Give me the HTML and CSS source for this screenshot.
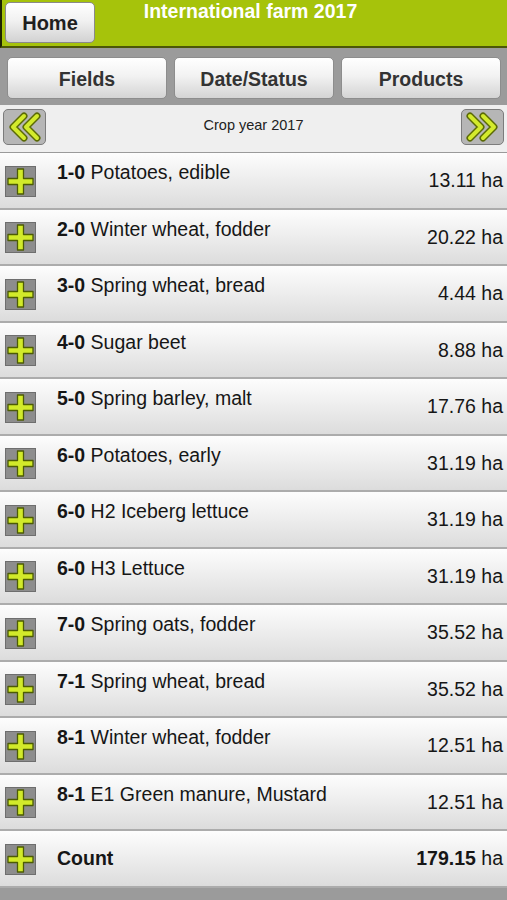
FILE: index.html
```html
<!DOCTYPE html>
<html lang="en">
<head>
  <meta charset="UTF-8" />
  <meta name="viewport" content="width=device-width, initial-scale=1" />
  <title>International farm 2017 - Fields</title>
  <link rel="stylesheet" href="styles.css">
</head>
<body>
  <!-- Green title bar -->
  <header class="header">
    <div class="header-left"><button class="home-btn">Home</button></div>
    <h1 class="title">International farm 2017</h1>
    <div></div>
  </header>

  <!-- Tab buttons -->
  <nav class="tabs">
    <button class="tab">Fields</button>
    <button class="tab">Date/Status</button>
    <button class="tab">Products</button>
  </nav>

  <!-- Crop year switcher -->
  <div class="yearbar">
    <button class="arrow-btn" aria-label="Previous year">
      <svg width="41" height="34" viewBox="0 0 41 34">
        <polyline points="20,6 9,17 20,28" class="chev-out" />
        <polyline points="33,6 22,17 33,28" class="chev-out" />
        <polyline points="20,6 9,17 20,28" class="chev-in" />
        <polyline points="33,6 22,17 33,28" class="chev-in" />
      </svg>
    </button>
    <span class="year-label">Crop year 2017</span>
    <button class="arrow-btn" aria-label="Next year">
      <svg width="41" height="34" viewBox="0 0 41 34">
        <polyline points="8,6 19,17 8,28" class="chev-out" />
        <polyline points="21,6 32,17 21,28" class="chev-out" />
        <polyline points="8,6 19,17 8,28" class="chev-in" />
        <polyline points="21,6 32,17 21,28" class="chev-in" />
      </svg>
    </button>
  </div>

  <!-- Field list -->
  <ul class="fields" id="fields"></ul>

  <div class="footer"></div>

  <script>
    const fields = [
      ['1-0', 'Potatoes, edible', '13.11'],
      ['2-0', 'Winter wheat, fodder', '20.22'],
      ['3-0', 'Spring wheat, bread', '4.44'],
      ['4-0', 'Sugar beet', '8.88'],
      ['5-0', 'Spring barley, malt', '17.76'],
      ['6-0', 'Potatoes, early', '31.19'],
      ['6-0', 'H2 Iceberg lettuce', '31.19'],
      ['6-0', 'H3 Lettuce', '31.19'],
      ['7-0', 'Spring oats, fodder', '35.52'],
      ['7-1', 'Spring wheat, bread', '35.52'],
      ['8-1', 'Winter wheat, fodder', '12.51'],
      ['8-1', 'E1 Green manure, Mustard', '12.51']
    ];

    // Farm total as reported by the app (fields share area, so not a plain sum)
    const totalArea = '179.15';

    // Plus icon used on every row
    const plusIcon =
      '<svg class="plus" width="31" height="31" viewBox="0 0 31 31">' +
      '<rect x="0.5" y="0.5" width="30" height="30" class="plus-box" />' +
      '<polygon points="12.5,3 18.5,3 18.5,12.5 28,12.5 28,18.5 18.5,18.5 18.5,28 12.5,28 12.5,18.5 3,18.5 3,12.5 12.5,12.5" class="plus-cross" />' +
      '</svg>';

    const list = document.getElementById('fields');

    fields.forEach(([code, name, area]) => {
      const li = document.createElement('li');
      li.className = 'row';
      li.innerHTML = plusIcon +
        '<span class="row-label"><b>' + code + '</b> ' + name + '</span>' +
        '<span class="row-value">' + area + ' ha</span>';
      list.appendChild(li);
    });

    // Total row
    const count = document.createElement('li');
    count.className = 'row row-total';
    count.innerHTML = plusIcon +
      '<span class="row-label"><b>Count</b></span>' +
      '<span class="row-value"><b>' + totalArea + '</b> ha</span>';
    list.appendChild(count);
  </script>
</body>
</html>
```

FILE: styles.css
```css
/* ==============================================
   BASE
   ============================================== */
body {
  margin: 0;
  font-family: "Liberation Sans", Arial, sans-serif;
  background: #9b9b9b;
  color: #161616;
}

button {
  font-family: inherit;
  cursor: pointer;
}

/* ==============================================
   GREEN HEADER
   ============================================== */
.header {
  height: 46px;
  display: grid;
  grid-template-columns: 1fr auto 1fr;
  align-items: start;
  background: #a6c30b;
  border-left: 2px solid #1e2300;
  border-bottom: 2px solid #4c5708;
}

.home-btn {
  margin: 2px 0 0 3px;
  width: 90px;
  height: 41px;
  padding-top: 3px;
  font-size: 20px;
  font-weight: bold;
  color: #1f1f1f;
  border: 1px solid #8a8a8a;
  border-radius: 5px;
  background: linear-gradient(#ffffff, #f1f1f1 45%, #d2d2d2);
  box-shadow: inset 0 1px 0 #fff;
}

.title {
  margin: 0 8px 0 0;
  padding-top: 0;
  font-size: 19.5px;
  line-height: 22px;
  font-weight: bold;
  color: #ffffff;
  white-space: nowrap;
}

/* ==============================================
   TAB BAR
   ============================================== */
.tabs {
  display: grid;
  grid-template-columns: repeat(3, 1fr);
  gap: 7px;
  padding: 9px 6px 6px 7px;
  background: #9b9b9b;
}

.tab {
  height: 42px;
  padding-top: 3px;
  font-size: 19.5px;
  font-weight: bold;
  color: #333;
  border: 1px solid #8d8d8d;
  border-radius: 5px;
  background: linear-gradient(#ffffff, #f2f2f2 45%, #d4d4d4);
}

/* ==============================================
   CROP YEAR BAR
   ============================================== */
.yearbar {
  height: 47px;
  display: flex;
  align-items: center;
  justify-content: space-between;
  padding: 0 3px;
  background: #efefef;
  border-bottom: 1px solid #9a9a9a;
}

.arrow-btn {
  width: 43px;
  height: 36px;
  margin-top: -4px;
  padding: 0;
  display: flex;
  align-items: center;
  justify-content: center;
  background: #b6b6b6;
  border: 1px solid #7c7c7c;
  border-radius: 5px;
}

.chev-out {
  fill: none;
  stroke: #5b6a06;
  stroke-width: 7;
  stroke-linecap: round;
  stroke-linejoin: round;
}

.chev-in {
  fill: none;
  stroke: #d3ea2c;
  stroke-width: 4;
  stroke-linecap: round;
  stroke-linejoin: round;
}

.year-label {
  margin-top: -7px;
  font-size: 14.5px;
  color: #222;
}

/* ==============================================
   FIELD ROWS
   ============================================== */
.fields {
  list-style: none;
  margin: 0;
  padding: 0;
}

.row {
  box-sizing: border-box;
  height: 56.5px;
  display: flex;
  align-items: center;
  padding: 0 4px 0 5px;
  background: linear-gradient(#fdfdfd, #f0f0f0 40%, #dcdcdc);
  border-bottom: 2px solid #acacac;
  font-size: 19.5px;
}

.plus {
  flex: none;
  margin-top: 2px;
}

.plus-box {
  fill: #8d8d8d;
  stroke: #6e6e6e;
  stroke-width: 1;
}

.plus-cross {
  fill: #d2ea2a;
  stroke: #4d5c04;
  stroke-width: 1.3;
  stroke-linejoin: round;
}

.row-label {
  flex: 1;
  align-self: flex-start;
  margin: 8px 0 0 21px;
  line-height: 22px;
  white-space: nowrap;
}

.row-value {
  margin-top: 1px;
  white-space: nowrap;
}

.row-total .row-label {
  align-self: center;
  margin-top: 0;
}

.row-total .row-value {
  margin-top: 0;
}

/* ==============================================
   FOOTER FILL
   ============================================== */
.footer {
  height: 40px;
  background: #9b9b9b;
}
```
